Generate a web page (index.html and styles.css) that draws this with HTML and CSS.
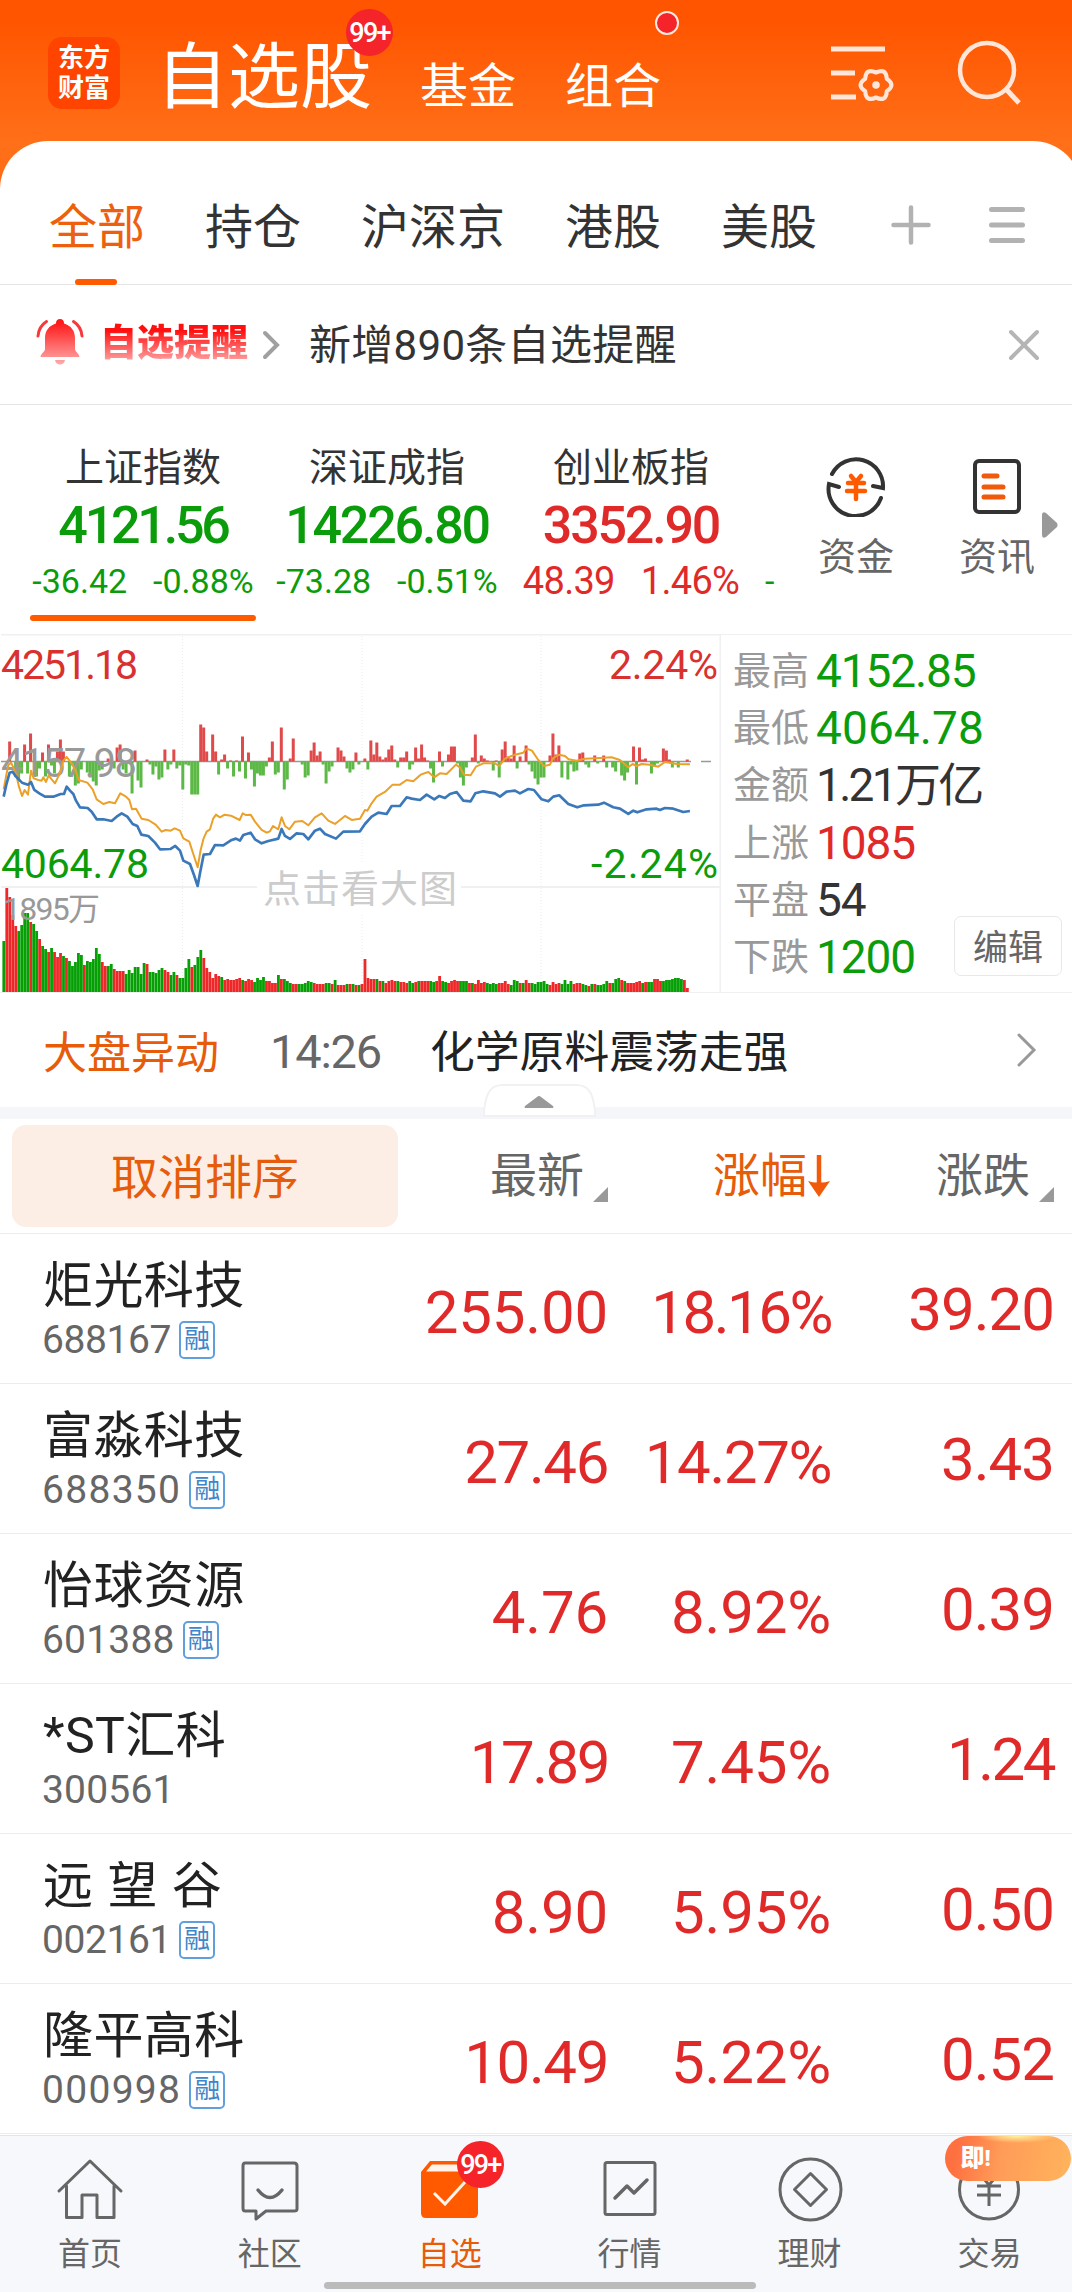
FILE: index.html
```html
<!DOCTYPE html>
<html lang="zh-CN">
<head>
    <meta charset="UTF-8">
    <meta name="viewport" content="width=device-width, initial-scale=1.0">
    <title>自选股</title>
    <link rel="stylesheet" href="styles.css">
</head>
<body>
    <div class="app">
        <header class="header">
            <div class="logo"><span>东方</span><span>财富</span></div>
            <div class="main-tab active">自选股<span class="badge">99+</span></div>
            <div class="main-tab">基金</div>
            <div class="main-tab last">组合<span class="dot"></span></div>
            <svg class="filter-icon" width="68" height="64" viewBox="0 0 68 64" fill="none" stroke="#ffe6d9" stroke-width="5">
                <path d="M1 7h54M1 31h24M1 55h25"/>
                <path d="M56.800 36.700Q66 43 56.800 49.300Q56 60.300 46 55.500Q36 60.300 35.200 49.300Q26 43 35.200 36.700Q36 25.700 46 30.500Q56 25.700 56.800 36.700Z" stroke-width="4.200" stroke-linejoin="round"/>
                <circle cx="46" cy="43" r="3.800" fill="#ffe6d9" stroke="none"/>
            </svg>
            <svg class="search-icon" width="66" height="66" viewBox="0 0 66 66" fill="none" stroke="#ffe6d9" stroke-width="4.500">
                <circle cx="30" cy="30" r="27"/>
                <path d="M49 49l13 14" stroke-width="5"/>
            </svg>
        </header>

        <main class="sheet">
            <nav class="tabs">
                <a class="tab active">全部</a>
                <a class="tab">持仓</a>
                <a class="tab">沪深京</a>
                <a class="tab">港股</a>
                <a class="tab">美股</a>
                <svg class="plus-icon" width="40" height="40" viewBox="0 0 40 40" stroke="#b2b2b2" stroke-width="4.500" stroke-linecap="round">
                    <path d="M20 2.500v35M2.500 20h35"/>
                </svg>
                <svg class="menu-icon" width="38" height="40" viewBox="0 0 38 40" stroke="#b2b2b2" stroke-width="5" stroke-linecap="round">
                    <path d="M3.500 4.500h31M3.500 20h31M3.500 35.500h31"/>
                </svg>
            </nav>

            <section class="alert">
                <svg class="bell-icon" width="48" height="48" viewBox="0 0 48 48">
                    <defs>
                        <linearGradient id="bell" x1="0" y1="0" x2="0" y2="48" gradientUnits="userSpaceOnUse">
                            <stop offset="0.1" stop-color="#ff1a1a"/>
                            <stop offset="1" stop-color="#ffb0b0"/>
                        </linearGradient>
                    </defs>
                    <path fill="url(#bell)" d="M24 1a4 4 0 0 1 4 4.500C35 7.500 39 13 39 20v11c0 3 4 4 4.500 8h-39C5 35 9 34 9 31V20C9 13 13 7.500 20 5.500A4 4 0 0 1 24 1zM19 42h10c-1 6-9 6-10 0z"/>
                    <path fill="none" stroke="#f8393b" stroke-width="3" stroke-linecap="round" d="M10.500 3.500C5 7 2.500 12 2 18M37.500 3.500C43 7 45.500 12 46 18"/>
                </svg>
                <b class="alert-title">自选提醒</b>
                <svg class="alert-arrow" width="18" height="30" viewBox="0 0 18 30" fill="none" stroke="#a0a0a0" stroke-width="4" stroke-linecap="round">
                    <path d="M3 3l12 12L3 27"/>
                </svg>
                <span class="alert-text">新增890条自选提醒</span>
                <svg class="close-icon" width="32" height="32" viewBox="0 0 32 32" stroke="#b5b5b5" stroke-width="4" stroke-linecap="round">
                    <path d="M3 3l26 26M29 3L3 29"/>
                </svg>
            </section>

            <section class="indices">
                <div class="index down active">
                    <div class="index-name">上证指数</div>
                    <div class="index-value ones">4121.56</div>
                    <div class="index-change"><span>-36.42</span><span>-0.88%</span></div>
                </div>
                <div class="index down">
                    <div class="index-name">深证成指</div>
                    <div class="index-value">14226.80</div>
                    <div class="index-change"><span>-73.28</span><span>-0.51%</span></div>
                </div>
                <div class="index up">
                    <div class="index-name">创业板指</div>
                    <div class="index-value">3352.90</div>
                    <div class="index-change big"><span>48.39</span><span>1.46%</span></div>
                </div>
                <div class="index-next">-</div>
                <div class="shortcut">
                    <svg width="62" height="62" viewBox="0 0 62 62" fill="none" stroke="#333" stroke-width="4" stroke-linecap="round">
                        <path d="M7 19A27 27 0 0 1 58 33l-10-2M56 43A27 27 0 0 1 4 29l10 3"/>
                        <path stroke="#ff5a00" stroke-width="4.500" d="M26 21l5 6 5-6M31 27v17M23 28h16M22 36h18"/>
                    </svg>
                    <span>资金</span>
                </div>
                <div class="shortcut">
                    <svg width="62" height="62" viewBox="0 0 62 62" fill="none" stroke="#333" stroke-width="4" stroke-linecap="round">
                        <rect x="9" y="6" width="44" height="51" rx="4"/>
                        <path stroke="#f05a0a" stroke-width="5" d="M18 21h13M18 32h19M18 42h19"/>
                    </svg>
                    <span>资讯</span>
                </div>
                <svg class="more-arrow" width="16" height="26" viewBox="0 0 16 26" fill="#999">
                    <path d="M0 3q0-4 4-2l11 10q1 2 0 4L4 25q-4 2-4-2z"/>
                </svg>
            </section>

            <section class="market">
                <svg class="chart" id="chart" width="721" height="358" viewBox="0 0 721 358"></svg>
                <div class="stats">
                    <div class="stat"><label>最高</label><span class="down">4152.85</span></div>
                    <div class="stat"><label>最低</label><span class="down wide">4064.78</span></div>
                    <div class="stat"><label>金额</label><span class="amount">1.21万亿</span></div>
                    <div class="stat"><label>上涨</label><span class="up">1085</span></div>
                    <div class="stat"><label>平盘</label><span>54</span></div>
                    <div class="stat"><label>下跌</label><span class="down">1200</span></div>
                    <button class="edit">编辑</button>
                </div>
            </section>

            <section class="news">
                <span class="news-tag">大盘异动</span>
                <span class="news-time">14:26</span>
                <span class="news-title">化学原料震荡走强</span>
                <svg class="news-arrow" width="20" height="34" viewBox="0 0 20 34" fill="none" stroke="#999" stroke-width="3" stroke-linecap="round">
                    <path d="M2 2l15 15L2 32"/>
                </svg>
            </section>
            <div class="divider">
                <svg class="handle" width="113" height="33" viewBox="0 0 113 33">
                    <path d="M1 32V27C3 8 8 1 20 1H93c12 0 17 7 19 26v5z" fill="#fff" stroke="#f1f1f3" stroke-width="2"/>
                    <path d="M42 24q-1-1 0-2l12-9q2-2 4 0l12 9q1 1 0 2z" fill="#999"/>
                </svg>
            </div>

            <section class="table">
                <div class="table-head">
                    <div><button class="cancel-sort">取消排序</button></div>
                    <div class="col">最新<i class="corner"></i></div>
                    <div class="col sorted">涨幅<svg width="24" height="44" viewBox="0 0 24 44"><path d="M12 1v32" stroke="#f05a0a" stroke-width="4.500"/><path d="M1 27q10 3 11 0 1 3 11 0L12 43z" fill="#f05a0a"/></svg></div>
                    <div class="col">涨跌<i class="corner"></i></div>
                </div>
                <div class="row">
                    <div><div class="name">炬光科技</div><div class="code narrow">688167<i class="tag">融</i></div></div>
                    <div class="num">255.00</div><div class="num tight">18.16%</div><div class="num diff">39.20</div>
                </div>
                <div class="row">
                    <div><div class="name">富淼科技</div><div class="code wide">688350<i class="tag">融</i></div></div>
                    <div class="num semi">27.46</div><div class="num semi">14.27%</div><div class="num diff">3.43</div>
                </div>
                <div class="row">
                    <div><div class="name">怡球资源</div><div class="code">601388<i class="tag">融</i></div></div>
                    <div class="num">4.76</div><div class="num">8.92%</div><div class="num diff">0.39</div>
                </div>
                <div class="row">
                    <div><div class="name">*ST汇科</div><div class="code">300561</div></div>
                    <div class="num tight">17.89</div><div class="num">7.45%</div><div class="num diff tight">1.24</div>
                </div>
                <div class="row">
                    <div><div class="name spaced">远 望 谷</div><div class="code narrow">002161<i class="tag">融</i></div></div>
                    <div class="num">8.90</div><div class="num">5.95%</div><div class="num diff">0.50</div>
                </div>
                <div class="row">
                    <div><div class="name">隆平高科</div><div class="code wide">000998<i class="tag">融</i></div></div>
                    <div class="num semi">10.49</div><div class="num">5.22%</div><div class="num diff">0.52</div>
                </div>
            </section>
        </main>

        <footer class="bottom-nav">
            <a class="nav-item">
                <svg width="70" height="70" viewBox="0 0 70 70" fill="none" stroke="#666" stroke-width="3" stroke-linecap="round" stroke-linejoin="round">
                    <path d="M4 37L35 7l31 30M11.500 32v31.500H27V41h15v22.500h17V32"/>
                </svg>
                <span>首页</span>
            </a>
            <a class="nav-item">
                <svg width="70" height="70" viewBox="0 0 70 70" fill="none" stroke="#666" stroke-width="3" stroke-linecap="round" stroke-linejoin="round">
                    <path d="M10 9h49q3 0 3 3v43q0 2-3 2H31l-10 8v-8H10q-2 0-2-3V12q0-3 2-3z"/>
                    <path d="M23 36q12 15 24 0" stroke-width="3.500"/>
                </svg>
                <span>社区</span>
            </a>
            <a class="nav-item active">
                <svg width="70" height="70" viewBox="0 0 70 70">
                    <path d="M6 18L15 7h39l9 11v41q0 5-5 5H11q-5 0-5-5z" fill="#ff5a00"/>
                    <path d="M11 17.500l6-7h36l5 7z" fill="#fff3ea"/>
                    <path d="M19 39l11 11 20-22" fill="none" stroke="#fff3ea" stroke-width="3"/>
                </svg>
                <span>自选</span>
                <em class="badge">99+</em>
            </a>
            <a class="nav-item">
                <svg width="70" height="70" viewBox="0 0 70 70" fill="none" stroke="#666" stroke-width="3" stroke-linecap="round" stroke-linejoin="round">
                    <rect x="10" y="8.500" width="50" height="52" rx="2"/>
                    <path d="M20 44l12-12 7 7 13-13" stroke-width="3.500"/>
                </svg>
                <span>行情</span>
            </a>
            <a class="nav-item">
                <svg width="70" height="70" viewBox="0 0 70 70" fill="none" stroke="#666" stroke-width="3" stroke-linejoin="round">
                    <circle cx="35.500" cy="35.500" r="30.500"/>
                    <path d="M35.500 19.500l16 16-16 16-16-16z"/>
                </svg>
                <span>理财</span>
            </a>
            <a class="nav-item">
                <svg width="70" height="70" viewBox="0 0 70 70" fill="none" stroke="#666" stroke-width="3">
                    <circle cx="35" cy="35.500" r="29.500"/>
                    <path d="M25 19l10 12 10-12M35 31v21M23 32h24M23 41h24"/>
                </svg>
                <span>交易</span>
                <em class="promo">即<small>!</small></em>
            </a>
            <div class="home-bar"></div>
        </footer>
    </div>
    <script src="chart.js"></script>
</body>
</html>
```

FILE: styles.css
```css
* {
    box-sizing: border-box;
}
body {
    margin: 0;
    background-color: #fff;
    font-family: Roboto, "Noto Sans CJK SC", sans-serif;
    color: #333;
}
i, em {
    font-style: normal;
}
button {
    border: none;
    padding: 0;
    font-family: inherit;
}
.app {
    width: 1072px;
    height: 2292px;
    overflow: hidden;
    display: flex;
    flex-direction: column;
    background: linear-gradient(#ff5500 0, #ff5500 20px, #ff7019 145px, #ff6a14 190px);
}
.up {
    color: #e02a2a;
}
.down {
    color: #0b9c0b;
}

/* header */
.header {
    height: 141px;
    flex: none;
    display: flex;
    align-items: flex-start;
    padding-left: 48px;
    color: #fff;
}
.logo {
    width: 72px;
    height: 72px;
    margin: 37px 36px 0 0;
    padding-top: 6px;
    border-radius: 14px;
    background-color: #ff4400;
    display: flex;
    flex-direction: column;
    align-items: center;
    font-size: 26px;
    font-weight: 700;
    line-height: 30px;
}
.main-tab {
    position: relative;
    margin-top: 52px;
    margin-right: 49px;
    font-size: 48px;
    line-height: 70px;
}
.main-tab.active {
    margin-top: 26px;
    margin-right: 48px;
    font-size: 72px;
    line-height: 104px;
}
.main-tab.last {
    margin-right: 169px;
}
.badge {
    position: absolute;
    left: 190px;
    top: -17px;
    width: 47px;
    height: 47px;
    border-radius: 50%;
    background-color: #f4242a;
    color: #fff;
    font-size: 27px;
    font-weight: 500;
    line-height: 48px;
    text-align: center;
    letter-spacing: -1.8px;
}
.dot {
    position: absolute;
    left: 90px;
    top: -41px;
    width: 24px;
    height: 24px;
    border: 2px solid #ffe9e0;
    border-radius: 50%;
    background-color: #f4242a;
}
.filter-icon {
    margin-top: 42px;
    margin-right: 59px;
}
.search-icon {
    margin-top: 40px;
}

/* white sheet runs a little past the right edge */
.sheet {
    flex: 1;
    width: 1081px;
    padding-right: 9px;
    border-radius: 48px 48px 0 0;
    background-color: #fff;
}
.tabs {
    height: 144px;
    display: flex;
    align-items: center;
    gap: 60px;
    padding: 24px 0 0 49px;
    border-bottom: 1px solid #e4e4e4;
    font-size: 48px;
}
.tab {
    position: relative;
    padding-top: 6px;
    line-height: 112px;
}
.tab.active {
    color: #ec6010;
}
.tab.active::after {
    content: "";
    position: absolute;
    left: 26px;
    bottom: -1px;
    width: 42px;
    height: 6px;
    border-radius: 3px;
    background-color: #ff5a00;
}
.plus-icon {
    margin: 0 0 0 14px;
}
.menu-icon {
    margin: 0 0 0 -3px;
}

/* alert */
.alert {
    height: 120px;
    display: flex;
    align-items: center;
    padding-left: 36px;
    border-bottom: 1px solid #e4e4e4;
}
.bell-icon {
    margin: -6px 16px 0 0;
}
.alert-title {
    font-size: 37px;
    font-weight: 900;
    line-height: 54px;
    margin-top: -2px;
    background: linear-gradient(#ff1010 25%, #ffa8a8 85%);
    -webkit-background-clip: text;
    background-clip: text;
    color: transparent;
}
.alert-arrow {
    margin: 0 29px 0 14px;
}
.alert-text {
    margin-top: -6px;
    font-size: 42px;
    letter-spacing: 0.3px;
}
.close-icon {
    margin: 0 32px 0 auto;
}

/* indices */
.indices {
    height: 229px;
    display: flex;
    padding-left: 21px;
}
.index {
    position: relative;
    width: 244px;
    padding-top: 33px;
    text-align: center;
}
.index.active::after {
    content: "";
    position: absolute;
    left: 9px;
    top: 210px;
    width: 226px;
    height: 6px;
    border-radius: 3px;
    background-color: #ff5a00;
}
.index-name {
    font-size: 39px;
    line-height: 60px;
    color: #333;
}
.index-value {
    font-size: 52px;
    font-weight: 500;
    line-height: 56px;
    letter-spacing: -2.2px;
}
.index-value.ones {
    letter-spacing: -3.200px;
}
.index-change {
    display: flex;
    justify-content: center;
    gap: 26px;
    font-size: 34px;
    line-height: 55px;
    letter-spacing: 0;
}
.index-change.big {
    font-size: 38px;
    letter-spacing: -0.7px;
}
.index-next {
    width: 54px;
    padding: 148px 0 0 12px;
    font-size: 34px;
    line-height: 56px;
    color: #0b9c0b;
}
.shortcut {
    width: 98px;
    margin-right: 43px;
    padding-top: 50px;
    display: flex;
    flex-direction: column;
    align-items: center;
    font-size: 38px;
    line-height: 60px;
    color: #666;
}
.shortcut span {
    margin-top: 10px;
}
.more-arrow {
    margin: 107px 0 0 -47px;
}

/* chart and figures */
.market {
    height: 359px;
    display: flex;
    border-bottom: 1px solid #f0f0f2;
}
.chart {
    flex: none;
    font-size: 41px;
}
.stats {
    position: relative;
    flex: 1;
    padding: 8px 0 0 12px;
    border-top: 1px solid #f0f0f2;
}
.stat {
    height: 57.2px;
    display: flex;
    align-items: center;
    gap: 7px;
    font-size: 46px;
    line-height: 57px;
    letter-spacing: -1.1px;
}
.stat label {
    width: 76px;
    font-size: 38px;
    letter-spacing: 0;
    color: #999;
}
.stat .wide {
    letter-spacing: 0.1px;
}
.stat .amount {
    letter-spacing: -2.700px;
}
.edit {
    position: absolute;
    right: 10px;
    top: 281px;
    width: 108px;
    height: 60px;
    padding-bottom: 4px;
    border: 1px solid #e8e8e8;
    border-radius: 7px;
    background-color: #fff;
    font-size: 35px;
    color: #666;
}

/* news */
.news {
    height: 114px;
    display: flex;
    align-items: center;
    padding-left: 43px;
    font-size: 44px;
}
.news-tag {
    width: 227px;
    color: #e65c0a;
}
.news-time {
    width: 160px;
    padding-top: 3px;
    font-size: 47px;
    letter-spacing: -1.2px;
    color: #666;
}
.news-title {
    margin-top: -3px;
    font-size: 44.8px;
    color: #222;
}
.news-arrow {
    margin: 0 35px 0 auto;
}
.divider {
    position: relative;
    height: 12px;
    background-color: #f5f6f9;
}
.handle {
    position: absolute;
    left: 483px;
    top: -23px;
}

/* stock table */
.table-head, .row {
    display: grid;
    grid-template-columns: 398px 210px 223px 223px;
    border-bottom: 1px solid #ececec;
}
.table-head {
    height: 115px;
    font-size: 47px;
    line-height: 112px;
    color: #666;
}
.cancel-sort {
    width: 386px;
    height: 102px;
    margin: 6px 0 0 12px;
    padding-bottom: 6px;
    display: block;
    border-radius: 14px;
    background-color: #fdeee5;
    font-size: 47px;
    color: #e65c0a;
}
.col {
    display: flex;
    justify-content: flex-end;
    align-items: center;
}
.corner {
    margin: 36px 0 0 9px;
    border-left: 15px solid transparent;
    border-bottom: 15px solid #999;
}
.col.sorted {
    color: #e65c0a;
}
.row {
    height: 150px;
}
.name {
    padding: 19px 0 0 43px;
    font-size: 50px;
    line-height: 67px;
    letter-spacing: 0.4px;
    color: #222;
}
.name.spaced {
    letter-spacing: 1px;
}
.code {
    display: flex;
    align-items: center;
    padding-left: 42px;
    font-size: 39px;
    line-height: 40px;
    letter-spacing: 0.2px;
    color: #666;
}
.code.narrow {
    letter-spacing: -0.4px;
}
.code.wide {
    letter-spacing: 1.300px;
}
.tag {
    width: 36px;
    height: 38px;
    margin-left: 8px;
    border: 2px solid #5f9fdc;
    border-radius: 5px;
    font-size: 26px;
    line-height: 33px;
    letter-spacing: 0;
    text-align: center;
    color: #3f86c8;
}
.num {
    font-size: 60px;
    line-height: 158px;
    letter-spacing: -0.2px;
    text-align: right;
    color: #e02a2a;
}
.num.diff {
    line-height: 151px;
    letter-spacing: -1px;
}
.num.semi {
    letter-spacing: -1.4px;
}
.num.tight {
    letter-spacing: -2.5px;
}

/* bottom navigation */
.bottom-nav {
    position: relative;
    flex: none;
    height: 157px;
    display: grid;
    grid-template-columns: repeat(6, 179.9px);
    border-top: 1px solid #e4e4e4;
    background-color: #f7f8fb;
}
.nav-item {
    position: relative;
    display: flex;
    flex-direction: column;
    align-items: center;
    padding-top: 18px;
    font-size: 32px;
    line-height: 46px;
    color: #666;
}
.nav-item span {
    margin-top: 7px;
}
.nav-item.active {
    color: #e65c0a;
}
.nav-item .badge {
    left: 97px;
    top: 5px;
}
.promo {
    position: absolute;
    left: 46px;
    top: 0;
    width: 126px;
    height: 45px;
    padding-left: 15px;
    border-radius: 23px;
    background: radial-gradient(ellipse 40px 7px at 72px 0, #fff3a0, rgba(255, 220, 120, 0)), linear-gradient(100deg, #ff7040 10%, #ff9c58 45%, #ffb45c);
    color: #fff;
    font-size: 24px;
    font-weight: 900;
    line-height: 45px;
    display: flex;
}
.promo small {
    font-size: 22px;
}
.home-bar {
    position: absolute;
    left: 324px;
    bottom: 3px;
    width: 432px;
    height: 7px;
    border-radius: 4px;
    background-color: #bbb;
}
```

FILE: chart.js
```javascript
// one bar per minute: colour + height
const volume = `g51 r104 r95 r77 r66 g61 g67 g79 g79 r70 g68 g61 r53 g46 g43 r40 g44 r40 r35 r39 g36 r34 g31 g26 g30 g39 g37 r27 g31 g30
g33 g44 g38 r30 r26 g26 g28 r23 r21 r21 r21 g18 g22 g19 g25 g25 g18 g29 r28 g20 g20 g19 g22 g24 r22 r20 g17 g20 r17 g14
g14 g24 g33 r25 g27 g35 g42 r34 r24 r20 r14 r18 r16 g15 r12 r13 r12 r12 r13 r14 g12 r11 r13 r12 g10 g14 g12 g15 r11 r11
r9 r9 g17 r13 g13 g11 g9 r8 r8 g8 g8 g9 g11 g10 r9 r8 r8 r8 g9 g9 r8 g12 r7 r7 r7 g8 r8 g8 r7
g7 r8 r33 r14 r13 r13 g13 r11 g11 r9 r11 r12 r11 g11 r10 r10 r9 g11 g9 r10 g11 r11 r11 r11 g11 g10 r11 r16 g11 g10 r9
r11 r12 r11 g11 g11 g11 r9 g9 r8 r12 r9 r10 g9 g8 g9 g8 r9 r9 r11 r8 g7 g12 g11 r9 g9 r12 r9 g9 g8 g10
g10 g11 g8 r7 r10 r8 r9 g8 g12 g8 g11 r8 r9 r9 g8 g7 r6 g8 r8 g7 g7 g8 g11 r9 g9 g13 g14
r12 g11 r9 r9 r9 r10 r11 g9 r10 g10 g10 r13 r13 r11 g11 g12 g12 g13 g14 g14 g13 r12 r4`;

// minute:delta against the zero line
const delta = `2:20 4:-15 5:-20 6:-12 7:17 8:-12 9:28 11:-15 12:-7 13:9 14:-15 15:17 16:-4 17:-12 18:10 19:22 20:10 22:-15 23:-4 24:-24 25:-22 26:-8
28:-11 29:-16 30:-20 31:-24 32:-9 33:-8 35:3 36:-3 37:-7 38:14 39:17 40:-8 41:-12 43:-32 44:11 45:-19 46:-26 48:2 49:-3 50:-13 51:-5 52:-18 53:-16
54:12 55:-8 56:-3 57:12 58:-7 59:-4 60:-28 61:-3 62:-4 63:-33 64:-33 65:-33 66:37 67:34 68:10 70:27 71:10 72:-13 73:2 74:7 75:-7 76:1 77:-15 78:1
79:-10 80:25 81:-17 82:9 83:-8 84:-25 85:-12 86:-14 87:-14 88:-5 89:4 90:20 91:-13 92:-11 93:34 94:-28 95:-18 96:3 97:23 100:-3 101:-16 102:-14
103:11 104:19 105:6 106:10 107:-3 108:-22 109:-10 110:-5 112:14 113:11 114:5 115:-7 116:-11 117:-8 118:9 119:-3 121:3 122:-8 123:21 124:7 125:19
126:5 127:2 128:4 129:12 130:16 131:2 132:-6 133:4 134:4 135:10 136:-8 137:-3 138:14 139:3 140:17 141:4 142:1 143:-7 144:-21 146:10 147:-5 149:7
150:15 151:15 152:-2 153:-16 154:-24 155:-6 157:4 158:27 159:-2 160:6 161:3 162:1 164:-9 165:1 166:-16 167:12 168:20 169:5 170:3 171:16 172:-7
173:5 175:16 176:-3 177:-10 178:-17 179:-23 180:-16 181:-16 183:6 184:28 185:7 186:16 187:-16 189:-18 190:-3 191:-10 192:-9 193:8 194:9 195:-3
196:-6 198:6 199:-2 201:6 202:-6 204:-6 205:-10 207:-14 208:-19 209:-11 211:15 212:-23 213:14 214:2 215:3 217:-12 218:-5 219:-2 221:13 222:11
223:2 224:-6 226:-6 229:2`;

const average = `11,478 18,440 25,405 33,398 40,412 50,440 57,470 66,498 74,480 84,494 93,422 101,445 115,450 125,452 130,442 138,456 146,436 155,448
165,460 182,425 190,392 200,381 215,400 228,425 236,450 262,458 278,478 290,508 310,522 328,516 345,520 361,490 378,500 388,510 396,538 408,536 425,566
445,570 467,584 485,605 497,600 512,602 524,595 540,602 550,625 568,635 580,672 593,712 602,660 611,625 620,605 630,598 640,565 648,554 660,562 674,554
693,557 719,570 728,550 737,555 752,554 765,575 785,600 800,608 810,604 819,588 835,598 845,562 855,588 868,598 885,575 907,573 925,586 945,562 965,550
985,572 1005,582 1035,558 1055,570 1080,566 1095,540 1102,542 1115,520 1130,500 1155,486 1178,464 1200,464 1220,450 1240,454 1262,434 1285,426
1303,442 1320,430 1340,432 1368,404 1380,412 1392,434 1412,436 1428,410 1450,400 1485,400 1498,408 1515,386 1545,374 1570,368 1580,356 1596,362
1615,390 1632,408 1650,404 1660,384 1677,374 1695,378 1706,388 1730,392 1755,386 1800,384 1835,382 1860,390 1885,412 1898,402 1910,408 1925,402
1950,404 1975,410 1995,396 2030,402 2070,403`;

const price = `11,500 20,460 29,428 38,425 48,440 66,458 84,464 93,456 103,480 118,490 135,500 160,500 182,492 192,492 200,470 210,482 220,492 228,512
240,532 263,534 275,545 290,568 310,568 335,573 350,560 365,550 382,560 398,582 412,588 424,614 445,618 465,638 480,658 512,657 526,648 540,662
550,692 570,702 582,735 593,768 600,730 611,674 630,672 645,645 670,646 695,630 708,626 720,632 730,615 752,608 765,628 785,640 805,633 835,626
845,597 855,618 870,627 890,610 910,612 925,628 945,602 960,596 975,612 1008,626 1030,605 1080,604 1095,582 1115,560 1135,548 1160,552 1175,528
1200,528 1220,502 1235,506 1260,510 1280,494 1303,508 1318,498 1335,504 1350,492 1370,486 1390,512 1412,514 1426,490 1450,484 1485,490 1500,500
1520,485 1545,482 1560,490 1585,477 1602,480 1625,508 1645,514 1660,500 1678,496 1705,522 1732,532 1752,526 1795,524 1812,518 1840,532 1860,536
1885,552 1900,542 1912,547 1940,538 1970,536 1980,540 1995,534 2020,536 2050,546 2070,543`;

const step = 2.985;
const zero = 127.5;
let svg = '';

// grid
svg += '<path d="M1 0.500H720.500V358M1 253H720" fill="none" stroke="#f0f0f2" stroke-width="2"/>';
svg += '<path d="M182.500 2V358M362 2V358M541 2V358" stroke="#ececf0" stroke-width="1" stroke-dasharray="1 2"/>';
svg += '<rect x="257" y="230" width="204" height="50" fill="#fff"/>';

volume.split(/\s+/).forEach((item, i) => {
    const h = Number(item.slice(1));
    const color = item[0] === 'r' ? '#ee2828' : '#06a006';
    svg += `<rect x="${(2.4 + i * step).toFixed(2)}" y="${358 - h}" width="2.8" height="${h}" fill="${color}"/>`;
});

svg += `<path d="M1 ${zero}H691M701 ${zero}h10" stroke="#999" stroke-width="1.5"/>`;

delta.split(/\s+/).forEach(item => {
    const [i, v] = item.split(':').map(Number);
    const y = v > 0 ? zero - v : zero;
    svg += `<rect x="${(2.2 + i * step).toFixed(2)}" y="${y}" width="3" height="${Math.abs(v)}" fill="${v > 0 ? '#e04a4a' : '#5cb946'}"/>`;
});

function label(text, x, y, width, color, size) {
    svg += `<text x="${x}" y="${y}" textLength="${width}" fill="${color}" font-size="${size}">${text}</text>`;
}
label('4251.18', 1, 45, 137, '#d93030', 41);
label('2.24%', 609, 45, 109, '#d93030', 41);
label('4157.98', 1, 143, 136, '#999', 40);
label('1895万', 3, 286, 97, '#999', 32);
label('点击看大图', 263, 268, 194, '#ccc', 38);

svg += `<g transform="translate(0 -4) scale(0.3333)" fill="none" stroke-linejoin="round">
    <polyline points="${average}" stroke="#eba028" stroke-width="6"/>
    <polyline points="${price}" stroke="#3a78ba" stroke-width="8"/>
</g>`;
label('4064.78', 1, 244, 148, '#0b9c0b', 41);
label('-2.24%', 591, 244, 127, '#0b9c0b', 41);

document.getElementById('chart').innerHTML = svg;
```
